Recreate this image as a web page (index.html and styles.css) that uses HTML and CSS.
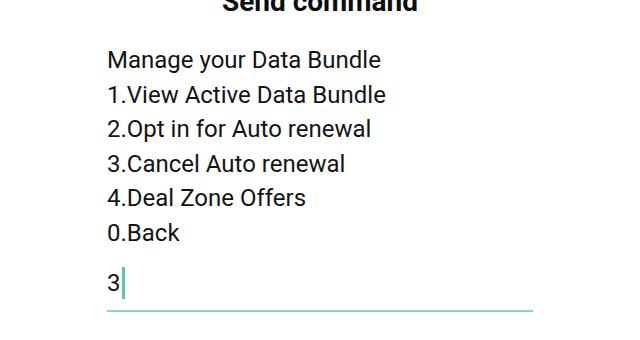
FILE: index.html
```html
<!DOCTYPE html>
<html lang="en">
<head>
    <meta charset="UTF-8">
    <meta name="viewport" content="width=device-width, initial-scale=1.0">
    <title>Send command</title>
    <link rel="stylesheet" href="styles.css">
</head>
<body>
    <div class="dialog">
        <h2 class="title">Send command</h2>

        <div class="message">
            <p>Manage your Data Bundle</p>
            <p>1.View Active Data Bundle</p>
            <p>2.Opt in for Auto renewal</p>
            <p>3.Cancel Auto renewal</p>
            <p>4.Deal Zone Offers</p>
            <p>0.Back</p>
        </div>

        <div class="reply">
            <span class="reply-text">3</span><span class="cursor"></span>
        </div>
    </div>
</body>
</html>
```

FILE: styles.css
```css
* {
    margin: 0;
    padding: 0;
    box-sizing: border-box;
}

body {
    font-family: Roboto, "Noto Sans", sans-serif;
    background: #ffffff;
    color: #141414;
    width: 640px;
    height: 340px;
    overflow: hidden;
}

.dialog {
    padding: 0 107px;
}

.title {
    text-align: center;
    font-size: 28px;
    font-weight: 700;
    color: #0d0d0d;
    line-height: 32px;
    margin-top: -14px;
}

.message {
    margin-top: 25px;
    font-size: 24px;
    line-height: 34.5px;
}

.reply {
    margin-top: 12px;
    height: 50px;
    padding-bottom: 7px;
    display: flex;
    align-items: center;
    border-bottom: 2px solid #86d6bd;
    font-size: 24px;
}

.cursor {
    width: 3px;
    height: 32px;
    background: #5cc7a5;
    margin-left: 1px;
}
```
